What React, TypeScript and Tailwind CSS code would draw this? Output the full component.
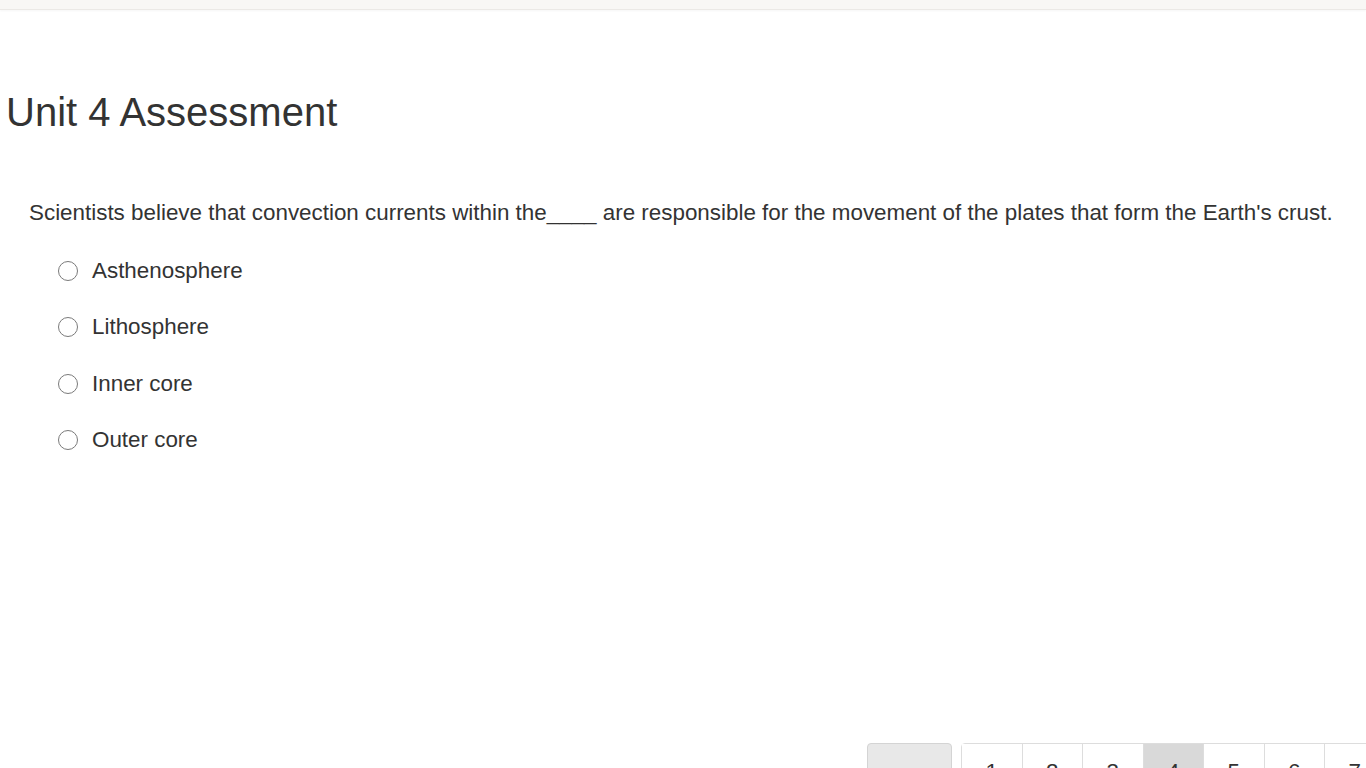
import React from 'react';

const OPTIONS = ['Asthenosphere', 'Lithosphere', 'Inner core', 'Outer core'];
const PAGES = [1, 2, 3, 4, 5, 6, 7, 8, 9, 10];

function Radio() {
  return <span className="block h-[20px] w-[20px] shrink-0 rounded-full border-[1.5px] border-[#7a7a7a] bg-white" />;
}

export default function App() {
  return (
    <div
      className="h-screen w-full overflow-hidden bg-white text-[#333333]"
      style={{ fontFamily: '"Liberation Sans", Arial, sans-serif' }}
    >
      {/* top strip */}
      <div className="h-[10px] border-b border-[#ebe9e6] bg-[#f8f7f5] shadow-[0_1px_2px_rgba(0,0,0,0.04)]" />

      <h1 className="mt-[80px] pl-[6px] text-[40px] font-normal leading-[44px]">Unit 4 Assessment</h1>

      <div className="mt-[65px] pl-[29px]">
        <p className="whitespace-nowrap text-[22.4px] leading-[28px]">
          Scientists believe that convection currents within the____ are responsible for the movement of the plates
          that form the Earth's crust.
        </p>
        <ul className="mt-[16px] pl-[29px]">
          {OPTIONS.map((o) => (
            <li key={o} className="flex h-[56.3px] items-center gap-[14px] text-[22.4px] leading-[28px]">
              <Radio />
              <span>{o}</span>
            </li>
          ))}
        </ul>
      </div>

      {/* pager */}
      <div className="mt-[275px] flex items-start whitespace-nowrap pl-[867px]">
        <button className="h-[56px] w-[85px] shrink-0 rounded-[4px] border border-[#d4d4d4] bg-[#e8e8e8]" />
        <div className="ml-[9px] flex shrink-0 rounded-[4px] border border-[#dddddd]">
          {PAGES.map((p) => (
            <span
              key={p}
              className={`flex h-[56px] w-[60.5px] shrink-0 items-center justify-center border-r border-[#dddddd] text-[22.4px] ${
                p === 4 ? 'bg-[#d9d9d9]' : 'bg-white'
              }`}
            >
              {p}
            </span>
          ))}
        </div>
      </div>
    </div>
  );
}
